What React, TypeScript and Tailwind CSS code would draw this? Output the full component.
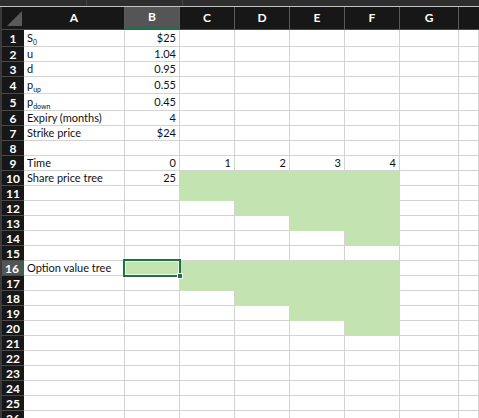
import type { ReactNode } from 'react'

type Col = { key: string; w: string }

const cols: Col[] = [
  { key: 'A', w: 'w-[101px]' },
  { key: 'B', w: 'w-[55px]' },
  { key: 'C', w: 'w-[55px]' },
  { key: 'D', w: 'w-[55px]' },
  { key: 'E', w: 'w-[55px]' },
  { key: 'F', w: 'w-[55px]' },
  { key: 'G', w: 'w-[59px]' },
  { key: '', w: 'flex-1' },
]

const rows = Array.from({ length: 26 }, (_, i) => i + 1)
const tall = new Set([1, 4, 5])

// filled cells (share price tree + option value tree staircase)
const green: Record<string, number[]> = {
  B: [16],
  C: [10, 11, 16, 17],
  D: [10, 11, 12, 16, 17, 18],
  E: [10, 11, 12, 13, 16, 17, 18, 19],
  F: [10, 11, 12, 13, 14, 16, 17, 18, 19, 20],
}

const sub = (base: string, s: string) => (
  <span>
    {base}
    <span className="relative top-[3px] text-[7px]">{s}</span>
  </span>
)

const cells: Record<string, ReactNode> = {
  A1: sub('S', '0'),
  A2: 'u',
  A3: 'd',
  A4: sub('p', 'up'),
  A5: sub('p', 'down'),
  A6: 'Expiry (months)',
  A7: 'Strike price',
  A9: 'Time',
  A10: 'Share price tree',
  A16: 'Option value tree',
  B1: '$25',
  B2: '1.04',
  B3: '0.95',
  B4: '0.55',
  B5: '0.45',
  B6: '4',
  B7: '$24',
  B9: '0',
  B10: '25',
  C9: '1',
  D9: '2',
  E9: '3',
  F9: '4',
}

function Cell({ col, row }: { col: Col; row: number }) {
  const filled = green[col.key]?.includes(row)
  const selected = col.key === 'B' && row === 16
  const content = cells[`${col.key}${row}`]
  return (
    <div
      className={`relative flex shrink-0 items-center border-r border-b px-[3px] pt-px ${col.w} ${
        filled ? 'border-[#c3e4b1] bg-[#c3e4b1]' : 'border-[#d3d3d3] bg-white'
      } ${col.key === 'A' ? 'justify-start' : 'justify-end'}`}
    >
      {content}
      {selected && (
        <div className="absolute -top-[2px] -left-[2px] z-10 h-[18px] w-[58px] border-2 border-[#1e7145]">
          <div className="absolute inset-0 border border-white/70" />
          <div className="absolute -right-[4px] -bottom-[4px] h-[6px] w-[6px] border border-white bg-[#1e7145]" />
        </div>
      )}
    </div>
  )
}

export default function App() {
  return (
    <div className="h-[418px] w-[479px] overflow-hidden bg-white font-['Lato',sans-serif] text-[11px] text-[#111]">
      {/* formula bar remnant */}
      <div className="flex h-[6px] bg-[#2e2e2e]">
        <div className="w-[87px] border-r border-[#444]" />
        <div className="w-[96px] border-r border-[#444]" />
      </div>
      <div className="h-px bg-[#c4c4c4]" />

      {/* column headers */}
      <div className="flex h-[23px] bg-[#171717] text-[12px] font-bold text-white">
        <div className="relative w-[24px] shrink-0 border-b border-[#4a4a4a] border-l-2 border-l-[#3a3a3a]">
          <svg className="absolute right-[2px] bottom-[3px]" width="15" height="15" viewBox="0 0 15 15">
            <polygon points="15,0 15,15 0,15" fill="#5a5a5a" />
          </svg>
        </div>
        {cols.map((c) => (
          <div
            key={c.key || 'H'}
            className={`flex shrink-0 items-center justify-center pb-px ${c.w} ${
              c.key === 'B'
                ? 'border-b-2 border-b-[#1e7145] bg-[#555555]'
                : 'border-b border-[#4a4a4a]'
            } ${c.key ? 'border-r border-r-[#5a5a5a]' : ''}`}
          >
            {c.key}
          </div>
        ))}
      </div>

      {/* grid */}
      {rows.map((r) => (
        <div key={r} className={`flex ${tall.has(r) ? 'h-[17px]' : 'h-[15px]'}`}>
          <div
            className={`flex w-[24px] shrink-0 items-center justify-center border-b border-[#4a4a4a] border-l-2 border-l-[#3a3a3a] pt-px text-[12px] font-bold text-white ${
              r === 16 ? 'border-r-2 border-r-[#1e7145] bg-[#555555]' : 'bg-[#171717]'
            }`}
          >
            {r}
          </div>
          {cols.map((c) => (
            <Cell key={c.key || 'H'} col={c} row={r} />
          ))}
        </div>
      ))}
    </div>
  )
}
